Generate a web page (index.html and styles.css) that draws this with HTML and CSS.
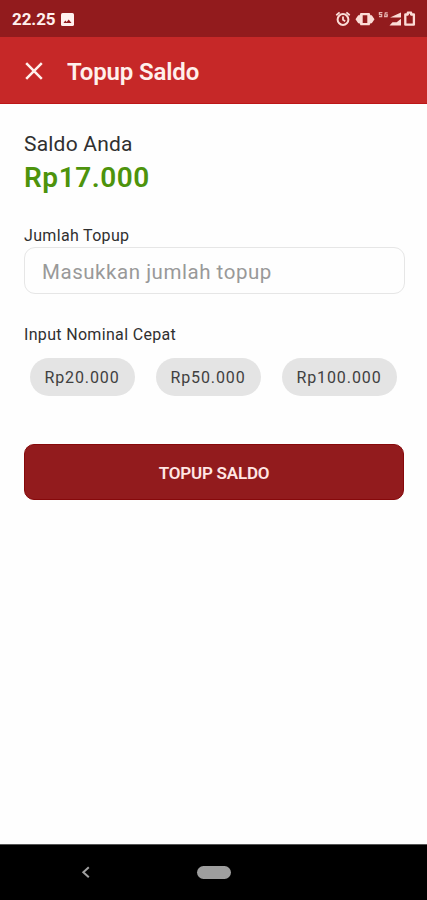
FILE: index.html
```html
<!DOCTYPE html>
<html lang="id">
<head>
<meta charset="utf-8">
<meta name="viewport" content="width=device-width, initial-scale=1">
<title>Topup Saldo</title>
<link rel="stylesheet" href="styles.css">
</head>
<body>
<div class="status">
  <span class="time">22.25</span>
  <svg class="photo" width="13" height="13" viewBox="0 0 13 13"><rect width="13" height="13" rx="1.6" fill="#fff0ee"/><path d="m2.500 10 1.800-2.400L5.700 9l2-2.400L10.500 10z" fill="#921b1d"/></svg>
  <svg class="system" width="84" height="20" viewBox="0 0 84 20" fill="none" stroke="#fbdcd6">
    <circle cx="9" cy="10.5" r="5.4" stroke-width="2"/>
    <path d="M9 7.500v3.300l2.200 1.400M2.300 6.300 5.600 3.400M15.700 6.300l-3.300-2.900" stroke-width="1.800"/>
    <path d="M26.500 4h9l1 2.200h1.300l2.700 4-2.700 4h-1.300l-1 2h-9l-1-2h-1.300l-2.700-4 2.700-4h1.300zM28.700 6.200v7.800h4.600V6.200z" fill="#fbdcd6" fill-rule="evenodd" stroke="none"/>
    <path d="M48.400 3.700h-3v2h2.300v2h-2.700M53.700 3.900h-2.400l-.7 3.800h2.500l.3-1.800h-1.500" stroke-width="1.200" opacity=".8"/>
    <path d="M67 3.400v5.200H56zM67 9.800v6.700H55.500l3-3.200h4.200z" fill="#fbdcd6" stroke="none"/>
    <path d="M71.300 5.500h2.500v-1.800h3.300v1.800h2.800v10.200h-8.600z" stroke-width="2.300" stroke-linejoin="round"/>
  </svg>
</div>
<header class="appbar">
  <svg width="18" height="18" viewBox="0 0 18 18" fill="none" stroke="#fff0ec" stroke-width="2.5"><path d="m1.200 1.200 15.600 15.600M16.800 1.200 1.200 16.800"/></svg>
  <h1 class="title">Topup Saldo</h1>
</header>
<main class="content">
  <div class="balance-label"><span>Saldo Anda</span></div>
  <div class="balance"><span>Rp17.000</span></div>
  <label class="label amount-label" for="amount"><span>Jumlah Topup</span></label>
  <input class="amount" id="amount" type="text" placeholder="Masukkan jumlah topup">
  <div class="label quick-label"><span>Input Nominal Cepat</span></div>
  <div class="chips">
    <button class="chip">Rp20.000</button>
    <button class="chip">Rp50.000</button>
    <button class="chip chip-wide">Rp100.000</button>
  </div>
  <button class="submit">TOPUP SALDO</button>
</main>
<nav class="navbar">
  <svg width="10" height="14" viewBox="0 0 10 14" fill="none" stroke="#a0a0a0" stroke-width="2"><path d="M7.800 1.300 2.300 6.300l5.500 5"/></svg>
  <span class="home"></span>
</nav>
</body>
</html>
```
FILE: styles.css
```css
* { box-sizing: border-box; }
body {
  margin: 0;
  height: 900px;
  display: flex;
  flex-direction: column;
  overflow: hidden;
  background: #fefefe;
  color: #303030;
  font-family: Roboto, sans-serif;
}
button, input { font-family: inherit; margin: 0; }
svg { display: block; flex: none; }
.status {
  height: 37px;
  display: flex;
  align-items: center;
  padding: 1px 9px 0 12px;
  background: #921b1d;
}
.time {
  width: 48.5px;
  color: #fff0ee;
  font-size: 17px;
  font-weight: 700;
  line-height: 20px;
  letter-spacing: -.1px;
}
.system { margin-left: auto; }
.appbar {
  height: 67px;
  display: flex;
  align-items: center;
  gap: 24px;
  padding: 2px 25px 0;
  background: #c62828;
  border-bottom: 1px solid #bd1618;
}
.title {
  margin: 0;
  padding-top: 2px;
  color: #fff0ec;
  font-size: 24px;
  font-weight: 600;
  line-height: 30px;
  letter-spacing: -.15px;
}
.content {
  flex: 1;
  display: flex;
  flex-direction: column;
  padding: 27px 22px 0 24px;
}
.balance-label { font-size: 21px; line-height: 26px; letter-spacing: .2px; }
.balance {
  margin-top: 4px;
  color: #4d930c;
  font-size: 28px;
  font-weight: 600;
  line-height: 34px;
  letter-spacing: .55px;
}
.label { font-size: 16px; line-height: 20px; letter-spacing: .33px; }
.amount-label { margin-top: 31px; }
.amount {
  width: 381px;
  height: 47px;
  margin-top: 1px;
  padding: 2px 17px 0;
  border: 1.5px solid #e6e6e6;
  border-radius: 11px;
  background: #fefefe;
  font-size: 20.5px;
  letter-spacing: .54px;
}
.amount::placeholder { color: #999; opacity: 1; }
.quick-label { margin-top: 31px; }
.chips {
  display: flex;
  gap: 21px;
  margin: 13px 0 0 6px;
}
.chip {
  width: 105px;
  height: 38px;
  padding: 0 1px 0 0;
  border: 0;
  border-radius: 19px;
  background: #e4e4e4;
  color: #404040;
  font-size: 16px;
  letter-spacing: .9px;
}
.chip-wide { width: 115px; }
.submit {
  width: 380px;
  height: 56px;
  margin-top: 48px;
  padding: 1px 0 0;
  border: 1px solid #86090b;
  border-radius: 10px;
  background: #921b1d;
  color: #ffe6e4;
  font-size: 17px;
  font-weight: 600;
  letter-spacing: -.2px;
}
.navbar {
  height: 56px;
  display: flex;
  align-items: center;
  gap: 106px;
  padding-left: 81px;
  background: #000;
  border-top: 1px solid #555;
}
.home {
  width: 34px;
  height: 13px;
  border-radius: 7px;
  background: #9e9e9e;
}
```
